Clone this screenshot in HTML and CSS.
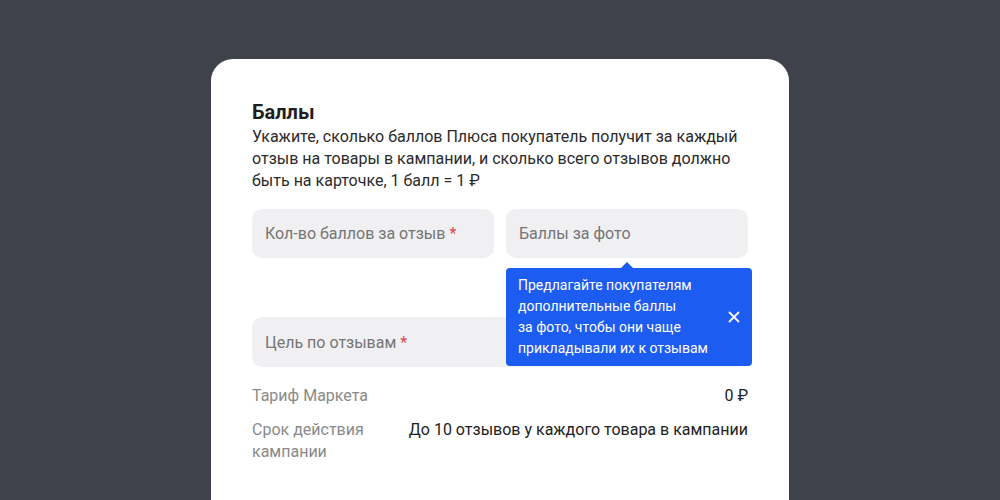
FILE: index.html
```html
<!DOCTYPE html>
<html lang="ru">
<head>
    <meta charset="UTF-8">
    <meta name="viewport" content="width=device-width, initial-scale=1.0">
    <title>Баллы</title>
    <link rel="stylesheet" href="styles.css">
</head>
<body>
    <div class="card">
        <h2 class="card-title">Баллы</h2>
        <p class="card-desc">Укажите, сколько баллов Плюса покупатель получит за&nbsp;каждый отзыв на&nbsp;товары в&nbsp;кампании, и&nbsp;сколько всего отзывов должно быть на&nbsp;карточке, 1&nbsp;балл = 1&nbsp;₽</p>

        <div class="fields">
            <div class="field">Кол-во баллов за отзыв <span class="req">*</span></div>
            <div class="field field-photo">
                Баллы за фото
                <!-- Подсказка -->
                <div class="hint">
                    <p class="hint-text">Предлагайте покупателям дополнительные баллы за&nbsp;фото, чтобы они чаще прикладывали их к&nbsp;отзывам</p>
                    <svg class="hint-close" width="12" height="12" viewBox="0 0 12 12">
                        <path d="M1.5 1.5 L10.5 10.5 M10.5 1.5 L1.5 10.5" stroke="#fff" stroke-width="1.8" stroke-linecap="round"/>
                    </svg>
                </div>
            </div>
            <div class="field field-wide">Цель по отзывам <span class="req">*</span></div>
        </div>

        <div class="info">
            <div class="info-row">
                <span class="info-label">Тариф Маркета</span>
                <span class="info-value">0 ₽</span>
            </div>
            <div class="info-row">
                <span class="info-label">Срок действия<br>кампании</span>
                <span class="info-value">До 10 отзывов у каждого товара в кампании</span>
            </div>
        </div>
    </div>
</body>
</html>
```

FILE: styles.css
```css
* {
    margin: 0;
    padding: 0;
    box-sizing: border-box;
}
html, body {
    width: 100%;
    height: 100%;
    overflow: hidden;
}
body {
    background-color: #3f424b;
    font-family: Roboto, "Noto Sans", sans-serif;
    color: #222;
    padding-top: 59px;
}
.card {
    width: 578px;
    height: 441px;
    margin: 0 auto;
    background: #fff;
    border-radius: 22px 22px 0 0;
    padding: 41px;
}
.card-title {
    font-size: 20px;
    line-height: 24px;
    font-weight: 700;
    color: #1f1f1f;
}
.card-desc {
    margin-top: 2px;
    font-size: 16px;
    line-height: 22px;
    color: #2b2b2b;
}
.fields {
    margin-top: 17px;
    display: grid;
    grid-template-columns: 1fr 1fr;
    column-gap: 12px;
    row-gap: 59px;
}
.field {
    position: relative;
    height: 49px;
    background: #f0f0f2;
    border-radius: 10px;
    padding: 0 13px;
    display: flex;
    align-items: center;
    font-size: 16px;
    color: #757575;
}
.field-wide {
    grid-column: 1 / 3;
    height: 50px;
}
.req {
    color: #e0474c;
    margin-left: 4px;
}
.hint {
    position: absolute;
    top: 59px;
    left: 0;
    width: 246px;
    height: 98px;
    background: #1d5cf0;
    border-radius: 4px;
    padding: 8px 12px;
    display: flex;
    align-items: center;
    justify-content: space-between;
    z-index: 2;
}
.hint::before {
    content: "";
    position: absolute;
    top: -6px;
    left: 115px;
    border-left: 6px solid transparent;
    border-right: 6px solid transparent;
    border-bottom: 6px solid #1d5cf0;
}
.hint-text {
    width: 195px;
    font-size: 14px;
    line-height: 21px;
    color: #fff;
}
.info {
    margin-top: 18px;
    display: flex;
    flex-direction: column;
    gap: 12px;
    font-size: 16px;
    line-height: 22px;
}
.info-row {
    display: flex;
    justify-content: space-between;
}
.info-label {
    color: #8a8a8a;
}
.info-value {
    color: #222;
}
```
